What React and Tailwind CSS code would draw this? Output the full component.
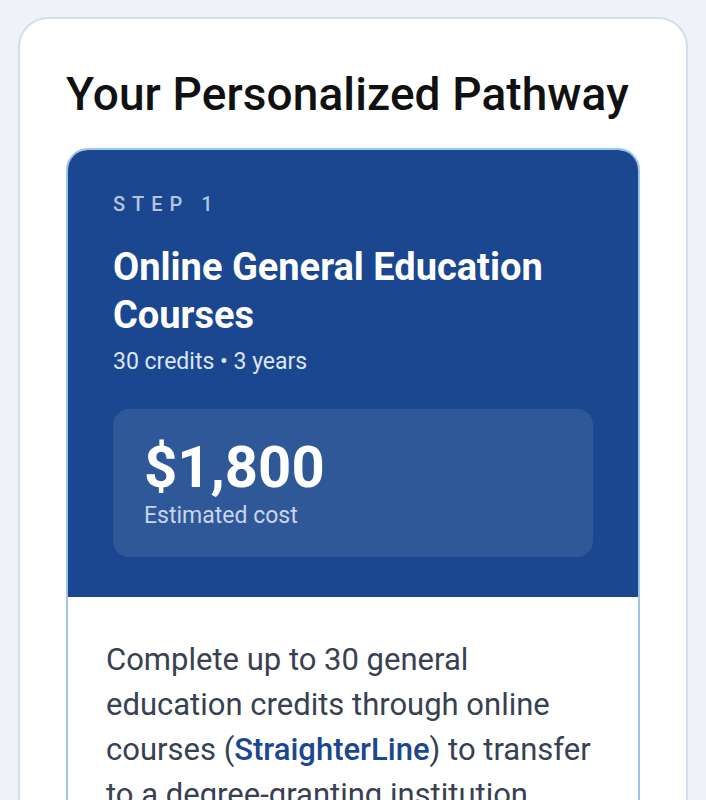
import React from 'react';

const App = () => {
  return (
    <div className="min-h-screen w-full bg-[#eff3f8] px-[18px] pt-[17px] font-['Roboto',sans-serif]">
      <div className="rounded-[30px] border-2 border-[#d3deea] bg-white px-[46px] pt-[48px] pb-10">
        <h1 className="text-[46px] font-medium leading-[55px] text-[#111111] tracking-[0.1px]">
          Your Personalized Pathway
        </h1>
        <div className="mt-[26px] overflow-hidden rounded-[22px] border-2 border-[#9cc6ee]">
          <div className="bg-[#1a4790] px-[45px] pt-[40px] pb-[40px]">
            <p className="text-[20px] leading-[28px] font-medium uppercase tracking-[0.35em] text-[#b4c4df]">Step 1</p>
            <h2 className="mt-[25px] text-[38px] font-bold leading-[48px] text-white">
              Online General Education Courses
            </h2>
            <p className="mt-[8px] text-[23px] leading-[30px] text-[#dce5f2]">30 credits • 3 years</p>
            <div className="mt-[32px] rounded-[16px] bg-[#2f5899] px-[31px] pt-[26px] pb-[25px]">
              <p className="text-[58px] font-bold leading-[64px] text-white">$1,800</p>
              <p className="mt-[1px] text-[23px] leading-[32px] text-[#c8d5eb]">Estimated cost</p>
            </div>
          </div>
          <div className="bg-white px-[38px] pt-[40px] pb-10">
            <p className="text-[31px] leading-[45px] text-[#374151]">
              Complete up to 30 general education credits through online courses (
              <span className="font-medium text-[#1a4790]">StraighterLine</span>
              ) to transfer to a degree-granting institution.
            </p>
          </div>
        </div>
      </div>
    </div>
  );
};

export default App;
